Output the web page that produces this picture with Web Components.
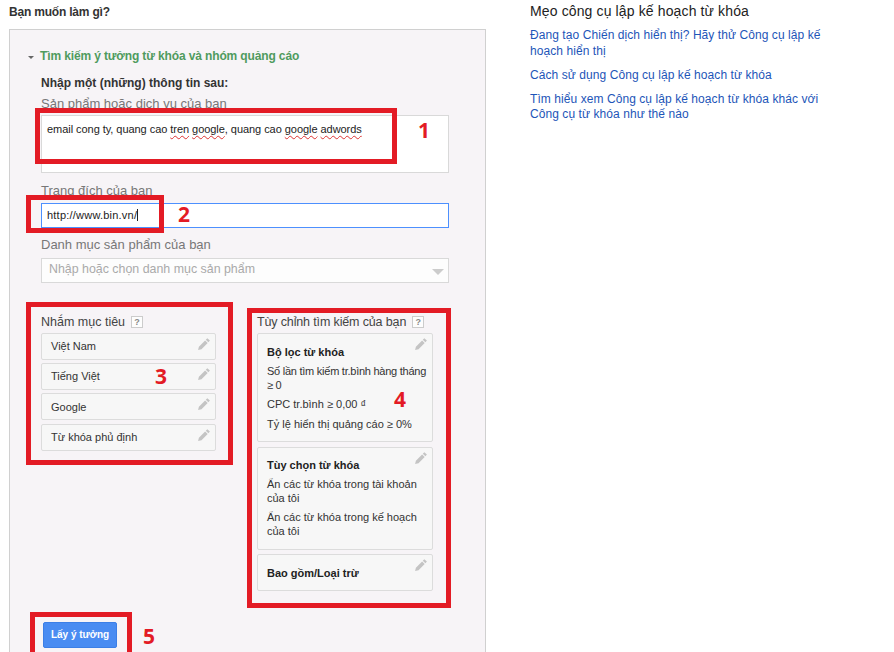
<!DOCTYPE html>
<html lang="vi"><head><meta charset="utf-8"><title>Keyword Planner</title>
<style>
html,body{margin:0;padding:0;background:#fff;font-family:"Liberation Sans",Arial,sans-serif;color:#222;overflow:hidden;height:652px}
</style></head><body>
<kp-page>
  <kp-main>
    <kp-section title="Tìm kiếm ý tưởng từ khóa và nhóm quảng cáo"></kp-section>
  </kp-main>
</kp-page>
<script>
function def(name,css,html){
  customElements.define(name,class extends HTMLElement{
    constructor(){super();const r=this.attachShadow({mode:'open'});r.innerHTML='<style>'+css+'</style>'+(typeof html==='function'?html(this):html);}
  });
}
const pencil='<svg viewBox="0 0 14 14" width="14" height="14"><path fill="#c4c4c4" d="M10.3 1.2l2.6 2.4-1.5 1.6-2.6-2.5zM8.1 3.4l2.6 2.5-6.2 6.3-3.4.9.8-3.4z"/></svg>';
def('kp-pencil',':host{display:block;position:absolute;right:4px;top:3px;width:14px;height:14px;line-height:0}',pencil);
def('kp-help',':host{display:inline-block;box-sizing:border-box;width:12px;height:12px;border:1px solid #ccc;background:#fdfdfd;color:#888;font:bold 9px/10px "Liberation Sans",sans-serif;letter-spacing:0;text-align:center;vertical-align:1px;margin-left:6px}','?');
def('kp-mark',`:host{display:block;position:absolute;box-sizing:border-box;border:5px solid #e31b25;pointer-events:none}`,'');
def('kp-num',`:host{display:block;position:absolute;color:#e31b25;font:bold 21px/24px "Open Sans","Liberation Sans",sans-serif}`,'<slot></slot>');
def('kp-field',`:host{display:block}
.l{font-size:13px;line-height:15px;color:#777}`,'<div class="l"><slot name="label"></slot></div><slot></slot>');
def('kp-card',`:host{display:block;position:relative;box-sizing:border-box;background:#f7f7f7;border:1px solid #dcdcdc;border-radius:2px;font-size:11px;line-height:14px;color:#333}`,'<slot></slot><kp-pencil></kp-pencil>');
def('kp-filter',`:host{display:block;position:relative;box-sizing:border-box;background:#f7f7f7;border:1px solid #dcdcdc;border-radius:2px;padding:11px 0 0 9px;font-size:11px;line-height:14px;color:#333}
::slotted(b){display:block;font-size:11px;line-height:14px;margin-bottom:5px;color:#222}
::slotted(p){margin:0 0 5px}`,'<slot></slot><kp-pencil></kp-pencil>');
def('kp-tips',`:host{display:block;width:305px;margin:3px 0 0 44px}
h2{font:400 14px/17px "Liberation Sans",sans-serif;color:#222;margin:0 0 8px;letter-spacing:.13px}
a{display:block;font-size:12px;line-height:15.5px;color:#1d55b8;margin-bottom:8.5px;text-decoration:none;letter-spacing:.07px}`,`<h2>Mẹo công cụ lập kế hoạch từ khóa</h2>
<a href="#">Đang tạo Chiến dịch hiển thị? Hãy thử Công cụ lập kế hoạch hiển thị</a>
<a href="#">Cách sử dụng Công cụ lập kế hoạch từ khóa</a>
<a href="#">Tìm hiểu xem Công cụ lập kế hoạch từ khóa khác với Công cụ từ khóa như thế nào</a>`);
def('kp-page',`:host{display:flex;padding-left:9px;position:relative;width:885px;height:652px;overflow:hidden}`,'<slot></slot><kp-tips></kp-tips>');
def('kp-main',`:host{display:block;width:477px}
h1{font:bold 12px/15px "Liberation Sans",sans-serif;color:#333;margin:5px 0 9px;letter-spacing:-.2px}`,'<h1>Bạn muốn làm gì?</h1><slot></slot>');
def('kp-section',`:host{display:block;position:relative;box-sizing:border-box;background:#f7f4f7;border:1px solid #d0d0d0;border-bottom:0;height:640px;padding:19px 36px 0 31px;font-family:"Liberation Sans",sans-serif}
.t{display:flex;align-items:center;color:#4f9b5e;font:bold 12px/15px "Liberation Sans",sans-serif;margin-left:-13px;letter-spacing:-.13px}
.tri{width:0;height:0;border:3px solid transparent;border-top:3px solid #666;border-bottom:0;margin:1px 6px 0 0}
.need{font:bold 12px/15px "Liberation Sans",sans-serif;color:#333;margin-top:12px;margin-bottom:5px}
.box{box-sizing:border-box;background:#fff;border:1px solid #d9d9d9;font-size:11px;color:#222}
.ta{height:58px;padding:6px 5px;line-height:14px;margin-bottom:10px;margin-top:4px;letter-spacing:-.05px}
.sq{text-decoration:underline wavy #d33;text-decoration-thickness:1px;text-underline-offset:2px}
.in{height:25px;border-color:#4d90fe;padding:0 5px;line-height:23px;margin-top:5px;margin-bottom:9px;letter-spacing:.22px}
.in i{display:inline-block;width:1px;height:12px;background:#222;vertical-align:-2px}
.sel{height:25px;margin-top:6px;padding:0 7px;font-size:12.4px;line-height:21px;color:#aaa;position:relative;background:#fdfdfd}
.sel:after{content:"";position:absolute;right:4px;top:10px;border:6px solid transparent;border-top:6px solid #ccc;border-bottom:0}
.cols{display:flex;gap:41px;margin-top:32px;align-items:flex-start}
.c1{width:175px;display:flex;flex-direction:column}.c2{width:176px;display:flex;flex-direction:column}
.hd{font-size:12.5px;line-height:15px;color:#444;margin-bottom:3px;white-space:nowrap}
.c2 .hd{letter-spacing:-.14px}
.row{padding:0 9px;height:27px;line-height:25px;margin-bottom:3px}
.nw{white-space:nowrap;letter-spacing:-.25px}
.btnrow{position:absolute;left:33px;top:592px}
button{display:block;width:74px;height:26px;border:1px solid #3d7fe6;border-radius:2px;background:#4a8cf2;color:#fff;font:bold 10px/24px "Liberation Sans",sans-serif;padding:0}`,
(el)=>`<div class="t"><span class="tri"></span>${el.getAttribute('title')}</div>
<div class="need">Nhập một (những) thông tin sau:</div>
<kp-field><span slot="label">Sản phẩm hoặc dịch vụ của bạn</span></kp-field>
<div class="box ta">email cong ty, quang cao <span class="sq">tren</span> <span class="sq">google</span>, quang cao <span class="sq">google</span> <span class="sq">adwords</span></div>
<kp-field><span slot="label">Trang đích của bạn</span></kp-field>
<div class="box in">http://www.bin.vn/<i></i></div>
<kp-field><span slot="label">Danh mục sản phẩm của bạn</span></kp-field>
<div class="box sel">Nhập hoặc chọn danh mục sản phẩm</div>
<div class="cols">
 <div class="c1"><div class="hd">Nhắm mục tiêu<kp-help></kp-help></div>
  <kp-card class="row">Việt Nam</kp-card><kp-card class="row">Tiếng Việt</kp-card><kp-card class="row" style="line-height:27px">Google</kp-card><kp-card class="row" style="margin-top:1px">Từ khóa phủ định</kp-card></div>
 <div class="c2"><div class="hd">Tùy chỉnh tìm kiếm của bạn<kp-help></kp-help></div>
  <kp-filter style="height:109px;margin-bottom:5px"><b>Bộ lọc từ khóa</b><p class="nw">Số lần tìm kiếm tr.bình hàng tháng<br>≥ 0</p><p style="margin-bottom:6px">CPC tr.bình ≥ 0,00 ₫</p><p>Tỷ lệ hiển thị quảng cáo ≥ 0%</p></kp-filter>
  <kp-filter style="height:103px;margin-bottom:4px;padding-top:10px"><b>Tùy chọn từ khóa</b><p style="margin-right:6px">Ẩn các từ khóa trong tài khoản của tôi</p><p style="margin-right:6px">Ẩn các từ khóa trong kế hoạch của tôi</p></kp-filter>
  <kp-filter style="height:37px"><b>Bao gồm/Loại trừ</b></kp-filter></div>
</div>
<div class="btnrow"><button>Lấy ý tưởng</button></div>
<kp-mark style="left:25px;top:78px;width:362px;height:56px"></kp-mark><kp-num style="left:408px;top:88px">1</kp-num>
<kp-mark style="left:16px;top:165px;width:138px;height:38px"></kp-mark><kp-num style="left:168px;top:172px">2</kp-num>
<kp-mark style="left:16px;top:272px;width:207px;height:163px"></kp-mark><kp-num style="left:145px;top:334px">3</kp-num>
<kp-mark style="left:237px;top:278px;width:204px;height:300px"></kp-mark><kp-num style="left:384px;top:357px">4</kp-num>
<kp-mark style="left:20px;top:582px;width:102px;height:50px"></kp-mark><kp-num style="left:133px;top:594px">5</kp-num>`);
</script>
</body></html>
